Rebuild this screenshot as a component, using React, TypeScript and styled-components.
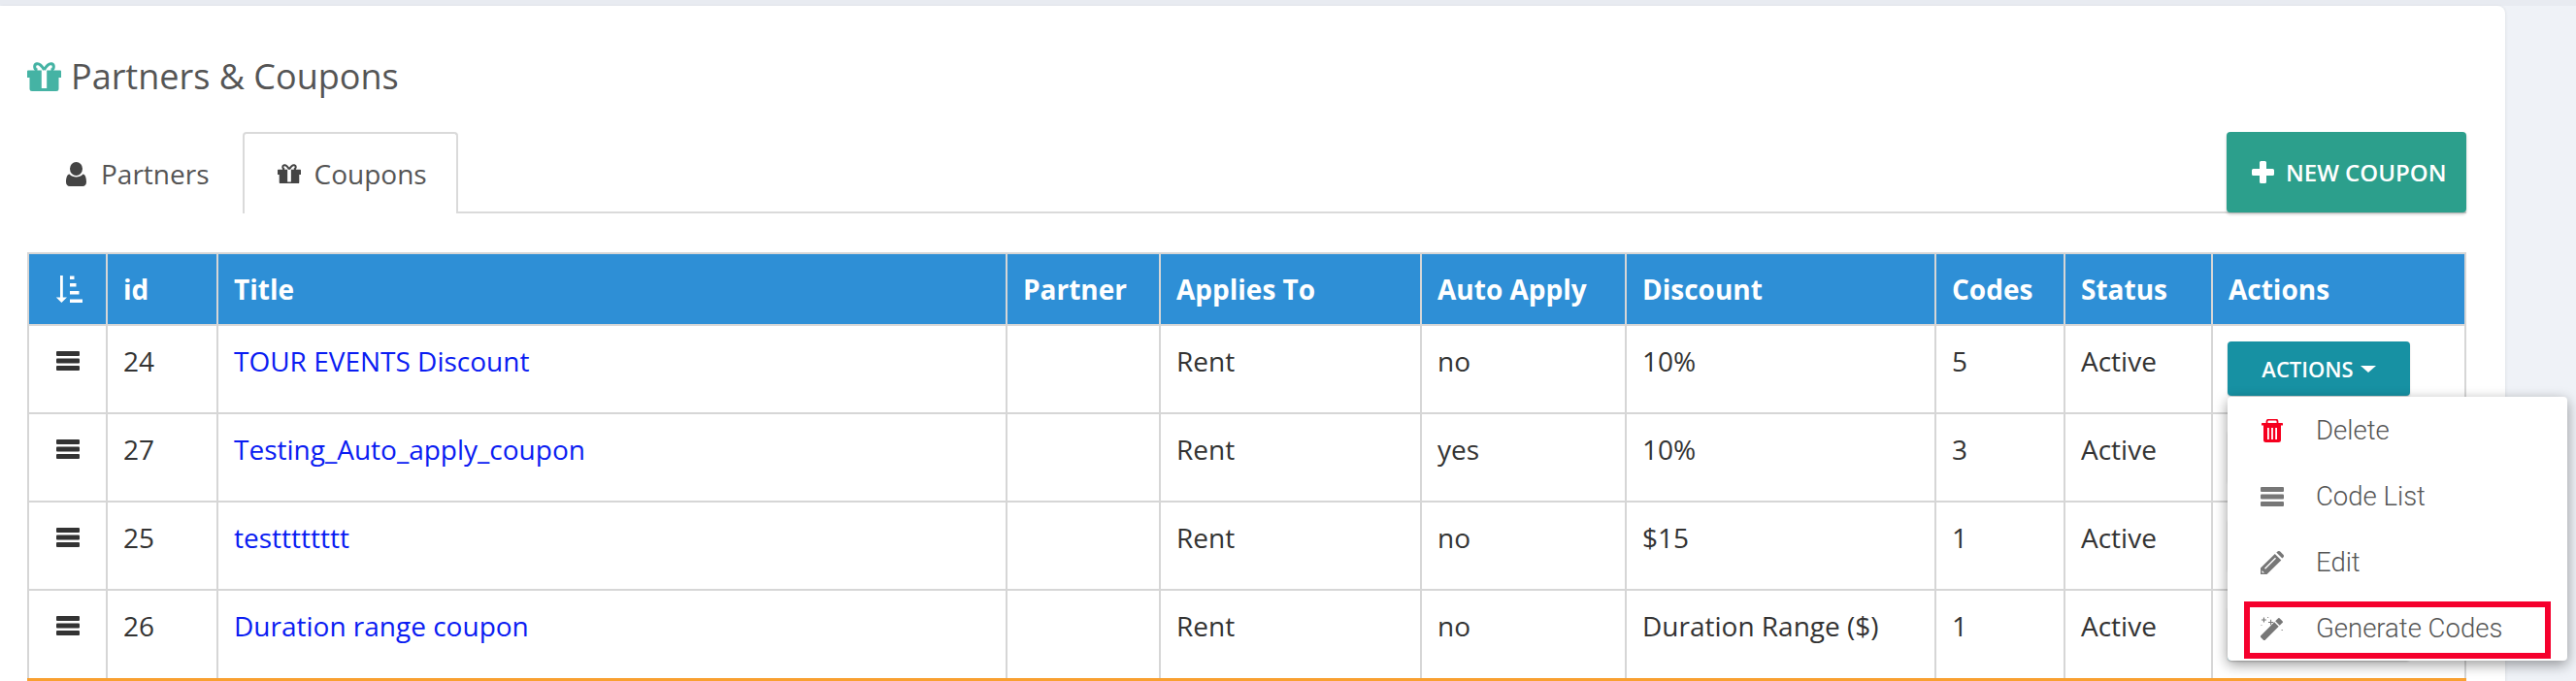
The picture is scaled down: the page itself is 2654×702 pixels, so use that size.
import { createGlobalStyle } from 'styled-components';
import styled from 'styled-components';

const Global = createGlobalStyle`
	html, body {
		margin: 0;
		height: 702px;
		overflow: hidden;
		background: #eff2f7;
		font-family: 'Open Sans', sans-serif;
		color: #333;
	}
	* {
		box-sizing: border-box;
	}
`;

const Page = styled.div`
	position: relative;
	width: 2654px;
	height: 702px;
	padding-top: 6px;
	overflow: hidden;
	background: linear-gradient(#e8ebf1 0 6px, #eff2f7 6px);
`;

const Panel = styled.div`
	width: 2581px;
	height: 720px;
	padding: 0 40px 0 28px;
	background: #fff;
	border-radius: 0 8px 0 0;
	box-shadow: 1px 0 3px rgba(0, 0, 0, 0.06);
`;

const Heading = styled.h1`
	display: flex;
	align-items: center;
	gap: 10px;
	height: 96px;
	margin: 0;
	padding-top: 50px;
	font-size: 36px;
	font-weight: 400;
	line-height: 46px;
	color: #555;
`;

const GiftIcon = ({ size, color }: { size: number; color: string }) => (
	<svg width={size} height={(size * 30) / 35} viewBox="0 0 35 30" fill={color}>
		<path
			fillRule="evenodd"
			d="M0 9.500a1 1 0 0 1 1-1h33a1 1 0 0 1 1 1V16h-2.500v11.500A2.500 2.500 0 0 1 30 30H5a2.500 2.500 0 0 1-2.500-2.500V16H0zM14.800 8.500V27h5.400V8.500z"
		/>
		<path
			d="M17.500 8C15 3.500 12 1.300 9.800 1.800 6.800 2.500 7 7.600 10.500 8M17.500 8C20 3.500 23 1.300 25.200 1.800c3 .7 2.800 5.800-.7 6.200"
			fill="none"
			stroke={color}
			strokeWidth="3"
		/>
	</svg>
);

const UserIcon = () => (
	<svg width="21" height="25" viewBox="0 0 21 25" fill="#444">
		<ellipse cx="10.500" cy="7" rx="6.500" ry="7" />
		<path d="M3.500 12.500c2 2.200 4.500 3 7 3s5-.8 7-3c2.300.6 3.500 3.500 3.500 8 0 2.800-1.500 4.500-3.800 4.500H3.800C1.500 25 0 23.300 0 20.500c0-4.500 1.200-7.400 3.500-8z" />
	</svg>
);

const PlusIcon = () => (
	<svg width="23" height="23" viewBox="0 0 23 23" fill="#fff">
		<path d="M8 1.500A1.500 1.500 0 0 1 9.500 0h4A1.500 1.500 0 0 1 15 1.500V8h6.500A1.500 1.500 0 0 1 23 9.500v4a1.500 1.500 0 0 1-1.500 1.500H15v6.500a1.500 1.500 0 0 1-1.500 1.500h-4A1.500 1.500 0 0 1 8 21.500V15H1.500A1.500 1.500 0 0 1 0 13.500v-4A1.500 1.500 0 0 1 1.500 8H8z" />
	</svg>
);

const SortIcon = () => (
	<svg width="28" height="28" viewBox="0 0 28 28" fill="#fff">
		<path d="M5 0h2.800v22.500H12L6.400 28 .8 22.500H5z" />
		<path d="M15 .5h4.500V4H15zM15 8h6.500v3.500H15zM15 16h9.500v3.500H15zM15 24.500h13V28H15z" />
	</svg>
);

const BarsIcon = ({ color }: { color: string }) => (
	<svg width="24" height="20" viewBox="0 0 24 20" fill={color}>
		<rect width="24" height="5" rx="1" />
		<rect y="7.500" width="24" height="5" rx="1" />
		<rect y="15" width="24" height="5" rx="1" />
	</svg>
);

const TrashIcon = () => (
	<svg width="22" height="24" viewBox="0 0 22 24" fill="#f5001e">
		<path d="M5.500 4.500V2.500A2 2 0 0 1 7.500.5h7a2 2 0 0 1 2 2v2" fill="none" stroke="#f5001e" strokeWidth="1.800" />
		<rect y="4" width="22" height="2.500" rx=".6" />
		<path
			fillRule="evenodd"
			d="M2 6h18v15.500a2.500 2.500 0 0 1-2.500 2.500h-13A2.500 2.500 0 0 1 2 21.500zM6 9v12h1.800V9zM10.100 9v12h1.800V9zM14.200 9v12H16V9z"
		/>
	</svg>
);

const PencilIcon = () => (
	<svg width="24" height="24" viewBox="0 0 24 24" fill="#777">
		<path
			fillRule="evenodd"
			d="M0 17.500 14.800 3l6.500 6.500L6.500 24H0zM4 17.700l1 1L16 7.800l-1-1zM1.500 20v2.500H4z"
		/>
		<path d="M16.300 1.600 17.500.6a2 2 0 0 1 2.700 0l3.200 3.200a2 2 0 0 1 0 2.700l-1.100 1.100z" />
	</svg>
);

const WandIcon = () => (
	<svg width="25" height="25" viewBox="0 0 25 25" fill="#777">
		<path d="M0 20.800 14.800 6l4.700 4.700L4.700 25.500a1 1 0 0 1-1.400 0L0 22.200a1 1 0 0 1 0-1.400z" />
		<path d="M15.800 5 19 1.800a1 1 0 0 1 1.400 0l3.300 3.300a1 1 0 0 1 0 1.400l-3.200 3.200z" />
		<path d="M3 1v2H1v1.200h2v2h1.200v-2h2V3h-2V1zM10.500 3.500v2.200H8.300v1.100h2.200V9h1.100V6.800h2.200V5.700h-2.200V3.500zM7.500 .5h1v1h-1zM22.500 14h1.200v1.200h-1.200zM.5 9h1v1h-1z" />
	</svg>
);

const TabBar = styled.div`
	display: flex;
	align-items: flex-start;
	height: 84px;
	margin-top: 34px;
	border-bottom: 2px solid #dadada;
`;

const Tab = styled.div<{ $active?: boolean }>`
	display: flex;
	align-items: center;
	gap: ${(p) => (p.$active ? '14px' : '15px')};
	height: 84px;
	padding: ${(p) => (p.$active ? '0 30px 0 34px' : '0 32px 0 38px')};
	font-size: 28px;
	color: #555;
	background: #fff;
	border: 2px solid ${(p) => (p.$active ? '#dadada' : 'transparent')};
	border-bottom: 0;
	border-radius: 4px 4px 0 0;
`;

const NewButton = styled.button`
	display: flex;
	align-items: center;
	gap: 12px;
	width: 247px;
	height: 83px;
	margin-left: auto;
	padding: 0 0 0 26px;
	border: 0;
	border-radius: 4px;
	font-family: inherit;
	font-size: 24px;
	font-weight: 600;
	color: #fff;
	background: #2c9f8c;
	box-shadow: 0 2px 3px rgba(0, 0, 0, 0.2);
`;

const Table = styled.table`
	width: 2513px;
	margin-top: 40px;
	border-collapse: collapse;
	table-layout: fixed;
	font-size: 28px;
	td,
	th {
		border: 2px solid #d6d6d6;
		padding: 0 0 0 16px;
		text-align: left;
	}
`;

const HeadCell = styled.th`
	height: 74px;
	font-weight: 700;
	color: #fff;
	background: #2e8fd6;
	svg {
		display: block;
		margin-left: 11px;
	}
`;

const Row = styled.tr`
	height: 91px;
	&:last-child {
		height: 93px;
	}
	&:last-child td {
		border-bottom: 4px solid #f9a030;
	}
`;

const Cell = styled.td`
	vertical-align: top;
	line-height: 38px;
	td& {
		padding-top: 17px;
	}
`;

const IconCell = styled(Cell)`
	td& {
		padding: 26px 0 0 0;
		text-align: center;
	}
	svg {
		display: inline-block;
		vertical-align: top;
	}
`;

const TitleLink = styled.a`
	color: #0a1cf2;
	text-decoration: none;
`;

const ActionsButton = styled.button`
	display: flex;
	align-items: center;
	justify-content: center;
	gap: 7px;
	width: 188px;
	height: 56px;
	margin: -1px 0 0 -1px;
	border: 0;
	border-radius: 4px;
	font-family: inherit;
	font-size: 22px;
	font-weight: 600;
	color: #fff;
	background: #1791a3;
	box-shadow: 0 1px 2px rgba(0, 0, 0, 0.2);
	&::after {
		content: '';
		border-top: 7px solid #fff;
		border-left: 8px solid transparent;
		border-right: 8px solid transparent;
	}
`;

const Menu = styled.ul`
	position: absolute;
	left: 2295px;
	top: 409px;
	width: 350px;
	height: 272px;
	margin: 0;
	padding: 0;
	list-style: none;
	background: #fff;
	border-radius: 4px;
	box-shadow: 0 4px 14px rgba(0, 0, 0, 0.4);
`;

const MenuItem = styled.li`
	display: flex;
	align-items: center;
	height: 68px;
	padding: 1px 0 0 34px;
	font-family: 'Roboto', 'Liberation Sans', sans-serif;
	font-size: 27.5px;
	font-weight: 300;
	color: #555;
`;

const MenuIcon = styled.span`
	display: flex;
	justify-content: center;
	width: 24px;
	margin-right: 33px;
`;

const Highlight = styled.div`
	position: absolute;
	left: 2312px;
	top: 620px;
	width: 316px;
	height: 59px;
	border: 6px solid #f5002d;
`;

const columns = [81, 114, 813, 158, 269, 211, 319, 133, 152, 261];

const coupons = [
	{ id: 24, title: 'TOUR EVENTS Discount', auto: 'no', discount: '10%', codes: 5 },
	{ id: 27, title: 'Testing_Auto_apply_coupon', auto: 'yes', discount: '10%', codes: 3 },
	{ id: 25, title: 'testttttttt', auto: 'no', discount: '$15', codes: 1 },
	{ id: 26, title: 'Duration range coupon', auto: 'no', discount: 'Duration Range ($)', codes: 1 },
];

function App() {
	return (
		<Page>
			<Global />
			<Panel>
				<Heading>
					<GiftIcon size={35} color="#45b3a4" />
					Partners &amp; Coupons
				</Heading>
				<TabBar>
					<Tab>
						<UserIcon />
						Partners
					</Tab>
					<Tab $active>
						<GiftIcon size={24} color="#444" />
						Coupons
					</Tab>
					<NewButton>
						<PlusIcon />
						NEW COUPON
					</NewButton>
				</TabBar>
				<Table>
					<colgroup>
						{columns.map((w, i) => (
							<col key={i} style={{ width: w }} />
						))}
					</colgroup>
					<thead>
						<tr>
							<HeadCell>
								<SortIcon />
							</HeadCell>
							<HeadCell>id</HeadCell>
							<HeadCell>Title</HeadCell>
							<HeadCell>Partner</HeadCell>
							<HeadCell>Applies To</HeadCell>
							<HeadCell>Auto Apply</HeadCell>
							<HeadCell>Discount</HeadCell>
							<HeadCell>Codes</HeadCell>
							<HeadCell>Status</HeadCell>
							<HeadCell>Actions</HeadCell>
						</tr>
					</thead>
					<tbody>
						{coupons.map((c) => (
							<Row key={c.id}>
								<IconCell>
									<BarsIcon color="#333" />
								</IconCell>
								<Cell>{c.id}</Cell>
								<Cell>
									<TitleLink href="#">{c.title}</TitleLink>
								</Cell>
								<Cell />
								<Cell>Rent</Cell>
								<Cell>{c.auto}</Cell>
								<Cell>{c.discount}</Cell>
								<Cell>{c.codes}</Cell>
								<Cell>Active</Cell>
								<Cell>
									<ActionsButton>ACTIONS</ActionsButton>
								</Cell>
							</Row>
						))}
					</tbody>
				</Table>
			</Panel>
			<Menu>
				<MenuItem>
					<MenuIcon>
						<TrashIcon />
					</MenuIcon>
					Delete
				</MenuItem>
				<MenuItem>
					<MenuIcon>
						<BarsIcon color="#777" />
					</MenuIcon>
					Code List
				</MenuItem>
				<MenuItem>
					<MenuIcon>
						<PencilIcon />
					</MenuIcon>
					Edit
				</MenuItem>
				<MenuItem>
					<MenuIcon>
						<WandIcon />
					</MenuIcon>
					Generate Codes
				</MenuItem>
			</Menu>
			<Highlight />
		</Page>
	);
}

export default App;
